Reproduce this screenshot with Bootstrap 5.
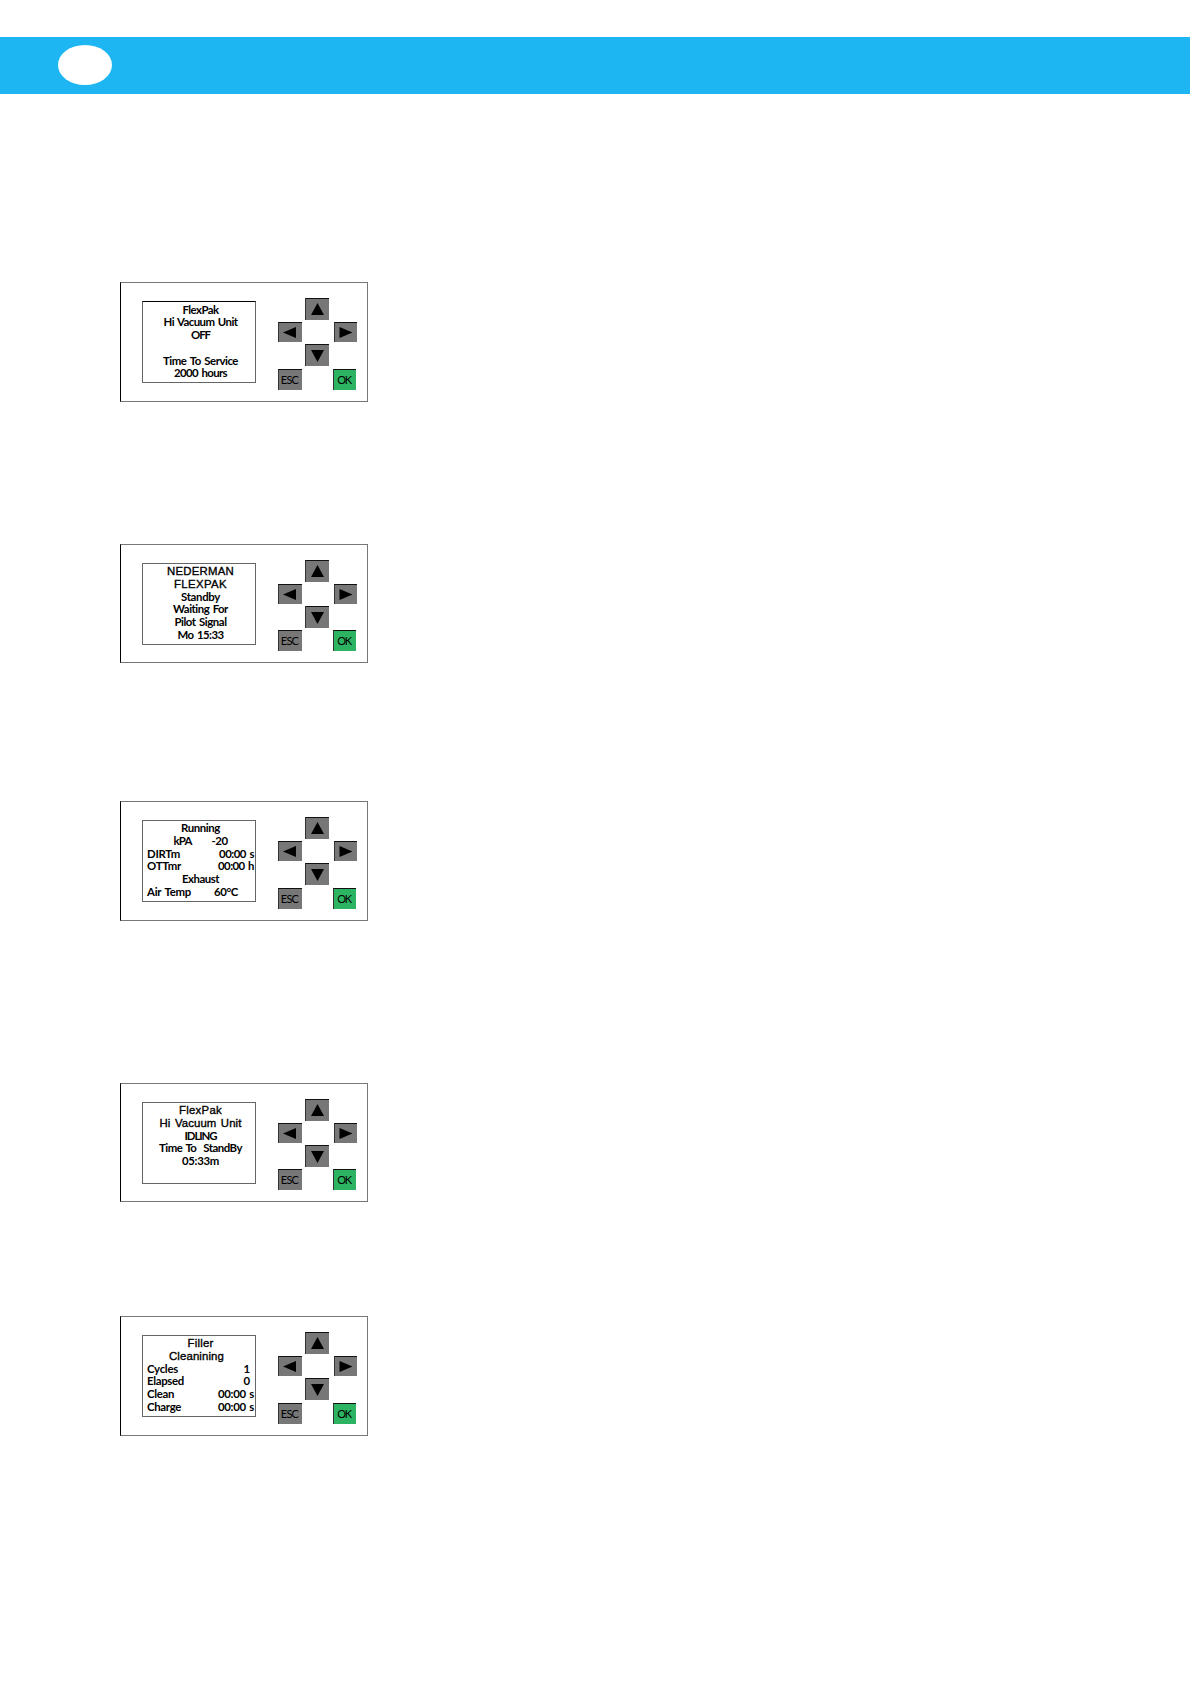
<!DOCTYPE html>
<html lang="en">
<head>
  <meta charset="UTF-8">
  <title>FlexPak display messages</title>
  <link href="https://cdn.jsdelivr.net/npm/bootstrap@5.3.2/dist/css/bootstrap.min.css" rel="stylesheet">
  <style>
    body {
      font-family: Lato, "Liberation Sans", sans-serif;
      color: #000;
      min-height: 1684px;
    }
    .page-band {
      height: 57px;
      margin: 37px 1px 0 0;
      padding: 8px 0 0 58px;
      background: #1eb5f3;
    }
    .page-oval {
      width: 54px;
      height: 40px;
    }
    .panels {
      padding: 188px 0 0 120px;
    }
    .panel {
      width: 248px;
      height: 120px;
      border: 1px solid #777;
      border-left-color: #000;
      padding: 15px 10px 0 21px;
    }
    .panel.p2, .panel.p4 { height: 119px; }
    .panel.p2 { margin-top: 142px; }
    .panel.p3 { margin-top: 138px; }
    .panel.p4 { margin-top: 162px; }
    .panel.p5 { margin-top: 114px; }
    .lcd {
      width: 114px;
      height: 82px;
      margin-top: 3px;
      border: 1px solid #666;
      padding: 1px 1px 0 4px;
      font-size: 11.4px;
      line-height: 12.8px;
      font-weight: 700;
      word-spacing: 1.2px;
    }
    .lcd.dark { border-top-color: #000; padding-top: 1.5px; }
    .line { height: 12.8px; }
    .line span { white-space: pre; }
    .arial {
      font-family: "Liberation Sans", Arial, sans-serif;
      font-weight: 400;
      -webkit-text-stroke: .35px #000;
    }
    .keys {
      display: grid;
      grid-template-columns: 24px 24px 23px;
      grid-template-rows: 22px 20px 22px 22px;
      column-gap: 4px;
      row-gap: 2px;
      width: 79px;
    }
    .key {
      background: #777;
      border-top: 1px solid #111;
      border-left: 1px solid #333;
      font-size: 11px;
      line-height: 1;
    }
    .key svg { display: block; }
    .key.mid { grid-column: 2; width: 24px; margin-left: -1px; }
    .key.west { grid-column: 1; }
    .key.east { grid-column: 3; }
    .key.last { margin-top: 1px; height: 21px; padding: 0 2px 2px 0; }
    .p2 .key.last, .p4 .key.last { margin-top: 0; }
    .key.ok { margin-left: -1px; margin-right: 1px; background: #2db462; }
  </style>
</head>
<body class="bg-white">
  <header class="page-band">
    <div class="page-oval bg-white rounded-circle"></div>
  </header>

  <main class="panels">
    <section class="panel p1 d-flex justify-content-between">
      <div class="lcd dark text-center">
        <div class="line"><span data-w="36">FlexPak</span></div>
        <div class="line"><span data-w="74">Hi Vacuum Unit</span></div>
        <div class="line"><span data-w="19">OFF</span></div>
        <div class="line"></div>
        <div class="line"><span data-w="75">Time To Service</span></div>
        <div class="line"><span data-w="53">2000 hours</span></div>
      </div>
    </section>

    <section class="panel p2 d-flex justify-content-between">
      <div class="lcd text-center">
        <div class="line arial"><span data-w="67">NEDERMAN</span></div>
        <div class="line arial"><span data-w="53">FLEXPAK</span></div>
        <div class="line"><span data-w="39">Standby</span></div>
        <div class="line"><span data-w="55">Waiting For</span></div>
        <div class="line"><span data-w="52">Pilot Signal</span></div>
        <div class="line"><span data-w="46">Mo 15:33</span></div>
      </div>
    </section>

    <section class="panel p3 d-flex justify-content-between">
      <div class="lcd text-center">
        <div class="line"><span data-w="39">Running</span></div>
        <div class="line d-flex justify-content-center"><span class="me-3" data-w="18">kPA</span><span class="ms-1" data-w="16">-20</span></div>
        <div class="line d-flex justify-content-between"><span data-w="33">DIRTm</span><span data-w="35">00:00 s</span></div>
        <div class="line d-flex justify-content-between"><span data-w="34">OTTmr</span><span data-w="36">00:00 h</span></div>
        <div class="line"><span data-w="37">Exhaust</span></div>
        <div class="line d-flex justify-content-between pe-3"><span data-w="44">Air Temp</span><span data-w="24">60°C</span></div>
      </div>
    </section>

    <section class="panel p4 d-flex justify-content-between">
      <div class="lcd text-center">
        <div class="line arial"><span data-w="43">FlexPak</span></div>
        <div class="line arial"><span data-w="82">Hi Vacuum Unit</span></div>
        <div class="line"><span data-w="32">IDLING</span></div>
        <div class="line"><span data-w="83">Time To  StandBy</span></div>
        <div class="line"><span data-w="37">05:33m</span></div>
      </div>
    </section>

    <section class="panel p5 d-flex justify-content-between">
      <div class="lcd text-center">
        <div class="line arial"><span data-w="26">Filler</span></div>
        <div class="line arial pe-2"><span data-w="55">Cleanining</span></div>
        <div class="line d-flex justify-content-between pe-1"><span data-w="31">Cycles</span><span>1</span></div>
        <div class="line d-flex justify-content-between pe-1"><span data-w="37">Elapsed</span><span>0</span></div>
        <div class="line d-flex justify-content-between"><span data-w="27">Clean</span><span data-w="36">00:00 s</span></div>
        <div class="line d-flex justify-content-between"><span data-w="34">Charge</span><span data-w="36">00:00 s</span></div>
      </div>
    </section>
  </main>

  <!-- Keypad, the same on every panel -->
  <template id="keypad">
    <div class="keys">
      <div class="key mid"><svg width="23" height="21"><path d="M11.500 4L18 16H5z"/></svg></div>
      <div class="key west"><svg width="23" height="19"><path d="M4 9.500L17 4V15z"/></svg></div>
      <div class="key east"><svg width="22" height="19"><path d="M17.500 9.500L4.500 4V15z"/></svg></div>
      <div class="key mid"><svg width="23" height="21"><path d="M11.500 17L18 5H5z"/></svg></div>
      <div class="key west last d-flex align-items-center justify-content-center"><span data-w="17.5">ESC</span></div>
      <div class="key east last ok d-flex align-items-center justify-content-center"><span data-w="13.5">OK</span></div>
    </div>
  </template>

  <script src="https://cdn.jsdelivr.net/npm/bootstrap@5.3.2/dist/js/bootstrap.bundle.min.js"></script>
  <script>
    const keypad = document.getElementById("keypad");
    document.querySelectorAll(".panel").forEach(p => p.append(keypad.content.cloneNode(true)));

    // spread the letters so that each text takes its width on the display
    document.querySelectorAll("[data-w]").forEach(el => {
      const diff = el.dataset.w - el.getBoundingClientRect().width;
      el.style.letterSpacing = diff / el.textContent.length + "px";
    });
  </script>
</body>
</html>
